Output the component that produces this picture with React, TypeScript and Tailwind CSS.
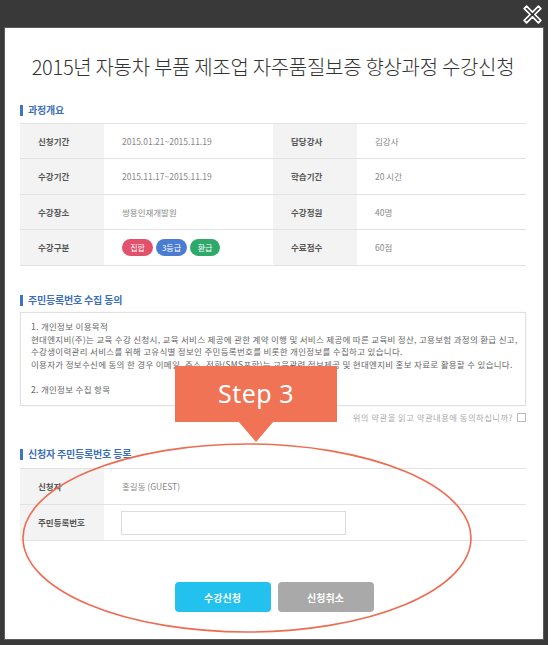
import React from "react";

const FONT = "font-['Noto_Sans_CJK_KR','Noto_Sans',sans-serif]";

function SectionHeader({ title }: { title: string }) {
  return (
    <div className="flex items-center h-[14px] gap-[5px]">
      <div className="w-[3px] h-[11px] bg-[#3f74c4]" />
      <div className="text-[10px] leading-[14px] font-bold text-[#3d6fb8] tracking-[-0.2px]">{title}</div>
    </div>
  );
}

function Label({ children }: { children: React.ReactNode }) {
  return (
    <div className="w-[84px] shrink-0 bg-[#f3f3f3] flex items-center pl-[18px] text-[8.5px] font-bold text-[#555]">
      {children}
    </div>
  );
}

function Value({ children }: { children: React.ReactNode }) {
  return (
    <div className="w-[169px] shrink-0 flex items-center pl-[18px] text-[8.5px] text-[#888]">{children}</div>
  );
}

export default function App() {
  return (
    <div className={`relative w-[548px] h-[645px] bg-[#393939] overflow-hidden ${FONT}`}>
      <div className="h-[27px] flex justify-end items-start pt-[5px] pr-[6px]">
        <svg width="19" height="19" viewBox="0 0 24 24">
          <polygon
            points="4.5,1.5 12,9 19.5,1.5 22.5,4.5 15,12 22.5,19.5 19.5,22.5 12,15 4.5,22.5 1.5,19.5 9,12 1.5,4.5"
            fill="#393939"
            stroke="#ffffff"
            strokeWidth="2.2"
            strokeLinejoin="round"
          />
        </svg>
      </div>

      <div className="mx-[4px] h-[613px] bg-white border border-[#5c5c5c] pl-[15px] pr-[17px] pt-[27px]">
        <div className="h-[24px] leading-[24px] text-center text-[20px] font-light text-[#333] tracking-[-0.3px] whitespace-nowrap">
          2015년 자동차 부품 제조업 자주품질보증 향상과정 수강신청
        </div>

        <div className="mt-[24px]">
          <SectionHeader title="과정개요" />
        </div>

        <div className="mt-[6px] w-[506px] border-t border-[#e2e2e2]">
          <div className="flex h-[35px] border-b border-[#e2e2e2]">
            <Label>신청기간</Label>
            <Value>2015.01.21~2015.11.19</Value>
            <Label>담당강사</Label>
            <Value>김강사</Value>
          </div>
          <div className="flex h-[36px] border-b border-[#e2e2e2]">
            <Label>수강기간</Label>
            <Value>2015.11.17~2015.11.19</Value>
            <Label>학습기간</Label>
            <Value>20 시간</Value>
          </div>
          <div className="flex h-[35px] border-b border-[#e2e2e2]">
            <Label>수강장소</Label>
            <Value>쌍용인재개발원</Value>
            <Label>수강정원</Label>
            <Value>40명</Value>
          </div>
          <div className="flex h-[36px] border-b border-[#e2e2e2]">
            <Label>수강구분</Label>
            <div className="w-[169px] shrink-0 flex items-center pl-[18px] gap-[3px]">
              <span className="h-[17px] w-[31px] rounded-full bg-[#e2516c] text-white text-[8px] flex items-center justify-center">
                집합
              </span>
              <span className="h-[17px] w-[31px] rounded-full bg-[#4a7dd2] text-white text-[8px] flex items-center justify-center">
                3등급
              </span>
              <span className="h-[17px] w-[30px] rounded-full bg-[#2ea86b] text-white text-[8px] flex items-center justify-center">
                환급
              </span>
            </div>
            <Label>수료점수</Label>
            <Value>60점</Value>
          </div>
        </div>

        <div className="mt-[27px]">
          <SectionHeader title="주민등록번호 수집 동의" />
        </div>

        <div className="mt-[5px] w-[506px] h-[94px] border border-[#e0e0e0] shadow-[0_0_2px_rgba(0,0,0,0.06)] pl-[10px] pt-[7px] text-[8.5px] tracking-[0.3px] leading-[12.6px] text-[#666] whitespace-nowrap overflow-hidden">
          <div>1. 개인정보 이용목적</div>
          <div>
            현대엔지비(주)는 교육 수강 신청시, 교육 서비스 제공에 관한 계약 이행 및 서비스 제공에 따른 교육비 정산, 고용보험 과정의 환급 신고,
          </div>
          <div>수강생이력관리 서비스를 위해 고유식별 정보인 주민등록번호를 비롯한 개인정보를 수집하고 있습니다.</div>
          <div>
            이용자가 정보수신에 동의 한 경우 이메일, 주소, 전화(SMS포함)는 교육관련 정보제공 및 현대엔지비 홍보 자료로 활용할 수 있습니다.
          </div>
          <div>&nbsp;</div>
          <div>2. 개인정보 수집 항목</div>
        </div>

        <div className="mt-[5px] w-[506px] h-[12px] flex items-center justify-end gap-[4px]">
          <span className="text-[8.3px] tracking-[0.5px] text-[#aaa]">위의 약관을 읽고 약관내용에 동의하십니까?</span>
          <span className="w-[9px] h-[9px] border border-[#bbb] bg-white" />
        </div>

        <div className="mt-[24px]">
          <SectionHeader title="신청자 주민등록번호 등록" />
        </div>

        <div className="mt-[7px] w-[506px] border-t border-[#e2e2e2]">
          <div className="flex h-[36px] border-b border-[#e2e2e2]">
            <Label>신청자</Label>
            <div className="flex items-center pl-[18px] text-[8.5px] text-[#888]">홍길동 (GUEST)</div>
          </div>
          <div className="flex h-[36px] border-b border-[#e2e2e2]">
            <Label>주민등록번호</Label>
            <div className="flex items-center pl-[17px]">
              <div className="w-[225px] h-[24px] border border-[#dcdcdc] bg-white" />
            </div>
          </div>
        </div>

        <div className="mt-[41px] flex justify-center gap-[7px] w-[506px] pl-[2px]">
          <button className="w-[96px] h-[30px] rounded-[4px] bg-[#22c1ee] text-white text-[10px] font-bold">
            수강신청
          </button>
          <button className="w-[96px] h-[30px] rounded-[4px] bg-[#a9a9a9] text-white text-[10px] font-bold">
            신청취소
          </button>
        </div>
      </div>

      {/* Ellipse highlight */}
      <svg className="absolute left-0 top-0 pointer-events-none" width="548" height="645">
        <ellipse cx="247" cy="538" rx="224" ry="94" fill="none" stroke="#ee6c51" strokeWidth="1.6" />
        <polygon points="238,421 274,421 256,442" fill="#f07355" />
      </svg>

      {/* Step 3 callout */}
      <div className="absolute left-[175px] top-[366px] w-[162px] h-[56px] bg-[#f07355] flex items-center justify-center pointer-events-none">
        <span className="text-white text-[25px] font-normal font-['Noto_Sans',sans-serif] tracking-[0.5px]">Step 3</span>
      </div>
    </div>
  );
}
